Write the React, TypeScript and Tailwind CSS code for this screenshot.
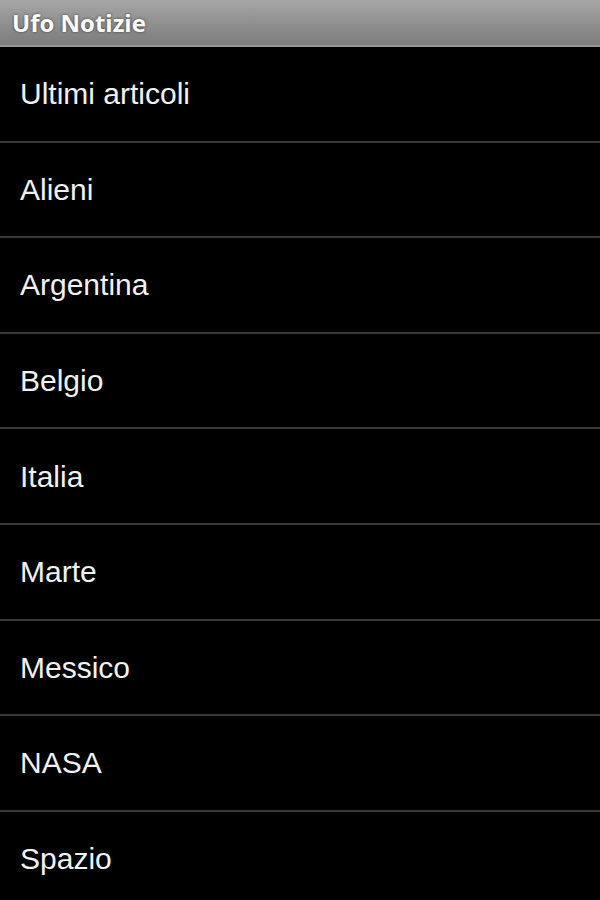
const items = [
  "Ultimi articoli",
  "Alieni",
  "Argentina",
  "Belgio",
  "Italia",
  "Marte",
  "Messico",
  "NASA",
  "Spazio",
];

export default function App() {
  return (
    <div className="w-[600px] h-[900px] bg-black overflow-hidden flex flex-col">
      {/* Title bar */}
      <div className="h-[47px] shrink-0 flex items-center px-3 bg-gradient-to-b from-[#a6a6a6] to-[#7c7c7c] border-b-2 border-[#959595]">
        <span className="font-['Open_Sans',sans-serif] font-bold text-[24px] text-white [text-shadow:0_0_3px_#3a3a3a]">
          Ufo Notizie
        </span>
      </div>

      {/* List */}
      <div className="flex flex-col">
        {items.map((item) => (
          <div
            key={item}
            className="h-[95.6px] shrink-0 flex items-center px-5 border-b-2 border-[#3a3a3a] font-['Liberation_Sans',Arial,sans-serif] text-[30px] text-[#f2f2f2]"
          >
            {item}
          </div>
        ))}
      </div>
    </div>
  );
}
